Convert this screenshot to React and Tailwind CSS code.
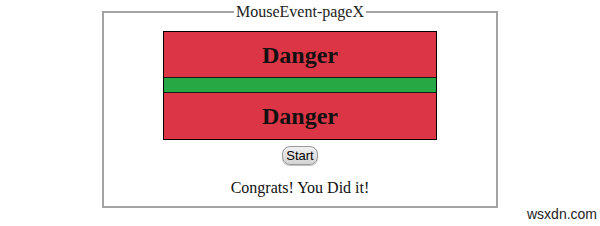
import React from 'react';

export default function App() {
  return (
    <div className="relative w-[600px] h-[226px] bg-white overflow-hidden" style={{ fontFamily: '"Liberation Serif", serif' }}>
      <fieldset className="ml-[102px] mt-[3px] w-[396px] h-[205px] border-2 border-[#a3a3a3] px-[59px] pt-[11px]">
        <legend className="mx-auto px-[2px] text-[16px] leading-[17px] text-[#222]">MouseEvent-pageX</legend>
        <div className="w-[274px] border border-black">
          <div className="h-[45px] bg-[#dc3545] flex items-center justify-center">
            <span className="text-[24px] font-bold text-[#111]">Danger</span>
          </div>
          <div className="h-[16px] bg-[#28a745] border-y border-[#1a1a1a]"></div>
          <div className="h-[46px] bg-[#dc3545] flex items-center justify-center">
            <span className="text-[24px] font-bold text-[#111]">Danger</span>
          </div>
        </div>
        <div className="flex justify-center mt-[6px]">
          <button className="h-[19px] px-[3px] rounded-[8px] border border-[#9a9a9a] bg-gradient-to-b from-[#f0f0f0] to-[#d4d4d4] text-[13px] leading-none text-black shadow-[0_1px_1px_rgba(0,0,0,0.25)]" style={{ fontFamily: '"Liberation Sans", Arial, sans-serif' }}>
            Start
          </button>
        </div>
        <p className="mt-[11px] text-center text-[16px] text-[#111]">Congrats! You Did it!</p>
      </fieldset>
      <span className="absolute left-[527px] top-[204px] text-[14px] text-[#222]" style={{ fontFamily: '"Liberation Sans", Arial, sans-serif' }}>wsxdn.com</span>
    </div>
  );
}
